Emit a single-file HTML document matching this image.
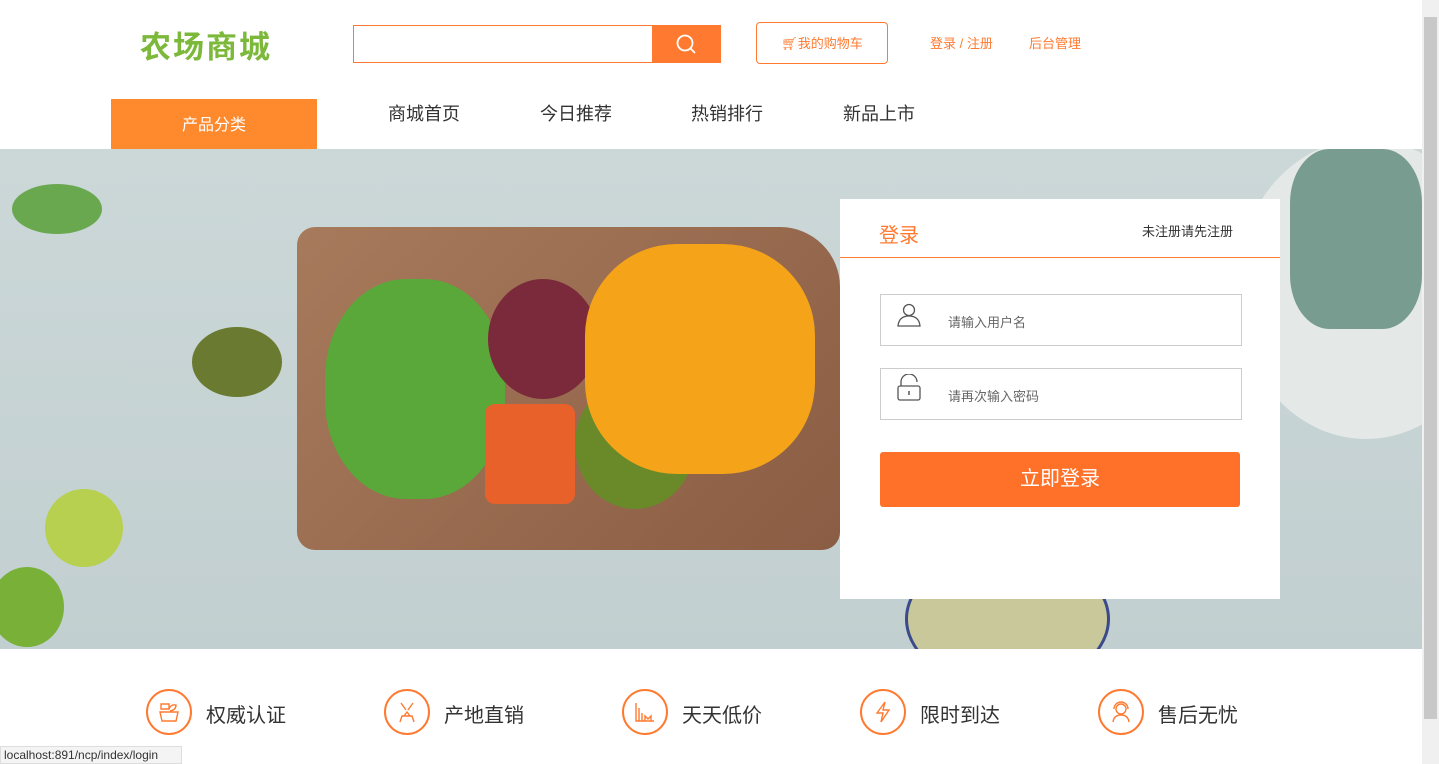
<!DOCTYPE html>
<html><head><meta charset="utf-8"><style>
*{margin:0;padding:0;box-sizing:border-box}
body{width:1439px;height:764px;overflow:hidden;background:#fff;font-family:"Liberation Sans","Noto Sans CJK SC",sans-serif;position:relative}
.a{position:absolute}
.nav{font-size:18px;color:#333;top:100px}
.feat{font-size:20px;color:#333;top:699px}
.ic{width:46px;height:46px;border:2px solid #ff7a30;border-radius:50%;top:689px}
.ic svg{position:absolute;left:9px;top:9px}
</style></head><body>
<div class="a" style="left:140px;top:22px;font-size:31px;font-weight:bold;color:#7cb83a;letter-spacing:2px;font-family:'WenQuanYi Zen Hei','Noto Sans CJK SC',sans-serif">农场商城</div>
<div class="a" style="left:353px;top:25px;width:300px;height:38px;border:1px solid #ff7a30;border-right:none"></div>
<div class="a" style="left:652px;top:25px;width:69px;height:38px;background:#ff7a30">
<svg width="69" height="38"><circle cx="33" cy="18" r="7.5" fill="none" stroke="#fff" stroke-width="1.8"/><line x1="38.5" y1="23.5" x2="43" y2="28" stroke="#fff" stroke-width="1.8"/></svg></div>
<div class="a" style="left:756px;top:22px;width:132px;height:42px;border:1px solid #ff7a30;border-radius:4px;color:#ff7a30;font-size:13px;line-height:42px;text-align:center">🛒︎我的购物车</div>
<div class="a" style="left:930px;top:33px;font-size:13px;color:#ff7a30">登录 / 注册</div>
<div class="a" style="left:1029px;top:33px;font-size:13px;color:#ff7a30">后台管理</div>
<div class="a" style="left:111px;top:99px;width:206px;height:50px;background:#ff8a2e;color:#fff;font-size:16px;text-align:center;line-height:54px">产品分类</div>
<div class="a nav" style="left:388px">商城首页</div>
<div class="a nav" style="left:540px">今日推荐</div>
<div class="a nav" style="left:691px">热销排行</div>
<div class="a nav" style="left:843px">新品上市</div>
<div class="a" style="left:0;top:149px;width:1422px;height:500px;background:linear-gradient(180deg,#ccd8d8,#c2cfd0);overflow:hidden">
<div class="a" style="left:1236px;top:-10px;width:260px;height:300px;border-radius:50%;background:#e4e9e8"></div>
<div class="a" style="left:905px;top:400px;width:205px;height:140px;border-radius:50%;background:#c8c89a;border:3px solid #3a4a8a"></div>
<div class="a" style="left:297px;top:78px;width:543px;height:323px;border-radius:18px 60px 18px 18px;background:linear-gradient(135deg,#a87a5c,#8a5d44)"></div>
<div class="a" style="left:325px;top:130px;width:180px;height:220px;border-radius:45%;background:#5aa83a"></div>
<div class="a" style="left:488px;top:130px;width:110px;height:120px;border-radius:50%;background:#7a2a3a"></div>
<div class="a" style="left:485px;top:255px;width:90px;height:100px;background:#e8602a;border-radius:10px"></div>
<div class="a" style="left:575px;top:230px;width:120px;height:130px;border-radius:50%;background:#6a8a2a"></div>
<div class="a" style="left:585px;top:95px;width:230px;height:230px;border-radius:40%;background:#f5a41a"></div>
<div class="a" style="left:192px;top:178px;width:90px;height:70px;border-radius:50%;background:#6a7a30"></div>
<div class="a" style="left:45px;top:340px;width:78px;height:78px;border-radius:50%;background:#b8d050"></div>
<div class="a" style="left:-10px;top:418px;width:74px;height:80px;border-radius:50%;background:#78b038"></div>
<div class="a" style="left:12px;top:35px;width:90px;height:50px;border-radius:50%;background:#6aa850"></div>
<div class="a" style="left:1290px;top:0;width:132px;height:180px;border-radius:30%;background:#4a7a6a;opacity:.7"></div>
</div>
<div class="a" style="left:840px;top:199px;width:440px;height:400px;background:#fff">
<div class="a" style="left:39px;top:20px;font-size:20px;color:#ff7a30">登录</div>
<div class="a" style="left:302px;top:22px;font-size:13px;color:#333">未注册请先注册</div>
<div class="a" style="left:0;top:58px;width:440px;height:1px;background:#ff7a30"></div>
<div class="a" style="left:40px;top:95px;width:362px;height:52px;border:1px solid #ccc"></div>
<div class="a" style="left:40px;top:169px;width:362px;height:52px;border:1px solid #ccc"></div>
<svg class="a" style="left:57px;top:103px" width="24" height="26"><circle cx="12" cy="8" r="5.5" fill="none" stroke="#555" stroke-width="1.3"/><path d="M1 24 Q2 14 12 14 Q22 14 23 24 Z" fill="none" stroke="#555" stroke-width="1.3"/></svg>
<svg class="a" style="left:57px;top:175px" width="24" height="28"><path d="M4 12 V8 A8 8 0 0 1 20 8" fill="none" stroke="#555" stroke-width="1.3"/><rect x="1" y="12" width="22" height="14" rx="2" fill="none" stroke="#555" stroke-width="1.3"/><line x1="12" y1="17" x2="12" y2="21" stroke="#555" stroke-width="1.5"/></svg>
<div class="a" style="left:108px;top:113px;font-size:13px;color:#666">请输入用户名</div>
<div class="a" style="left:108px;top:187px;font-size:13px;color:#666">请再次输入密码</div>
<div class="a" style="left:40px;top:253px;width:360px;height:55px;background:#ff7028;border-radius:3px;color:#fff;font-size:20px;text-align:center;line-height:55px">立即登录</div>
</div>
<div class="a ic" style="left:146px"><svg width="24" height="24" fill="none" stroke="#ff7a30" stroke-width="1.4"><path d="M4 4h8v5H4z"/><path d="M3 12h18l-2 9H5z"/><path d="M12 9 Q14 4 19 5 Q19 10 13 11"/></svg></div><div class="a feat" style="left:206px">权威认证</div>
<div class="a ic" style="left:384px"><svg width="24" height="24" fill="none" stroke="#ff7a30" stroke-width="1.4"><path d="M6 3l5 7M18 3l-5 7M5 22l2-6h10l2 6M9 16 12 12 15 16"/></svg></div><div class="a feat" style="left:444px">产地直销</div>
<div class="a ic" style="left:622px"><svg width="24" height="24" fill="none" stroke="#ff7a30" stroke-width="1.4"><path d="M3 3v18h18M6 21V8M9 21v-8M12 21v-5l3 3 3-3v5"/></svg></div><div class="a feat" style="left:682px">天天低价</div>
<div class="a ic" style="left:860px"><svg width="24" height="24" fill="none" stroke="#ff7a30" stroke-width="1.4"><path d="M14 2 6 13h6l-2 9 8-12h-6z"/></svg></div><div class="a feat" style="left:920px">限时到达</div>
<div class="a ic" style="left:1098px"><svg width="24" height="24" fill="none" stroke="#ff7a30" stroke-width="1.4"><circle cx="12" cy="9" r="5"/><path d="M5 9a7 7 0 0 1 14 0M4 22q1-7 8-7 7 0 8 7"/></svg></div><div class="a feat" style="left:1158px">售后无忧</div>
<div class="a" style="left:1422px;top:0;width:17px;height:764px;background:#f0f0f0"></div>
<div class="a" style="left:1424px;top:17px;width:13px;height:702px;background:#c8c8c8"></div>
<div class="a" style="left:0;top:746px;width:182px;height:18px;background:#f4f4f4;border:1px solid #ddd;font-size:12px;color:#333;padding-left:3px;line-height:16px">localhost:891/ncp/index/login</div>
</body></html>
